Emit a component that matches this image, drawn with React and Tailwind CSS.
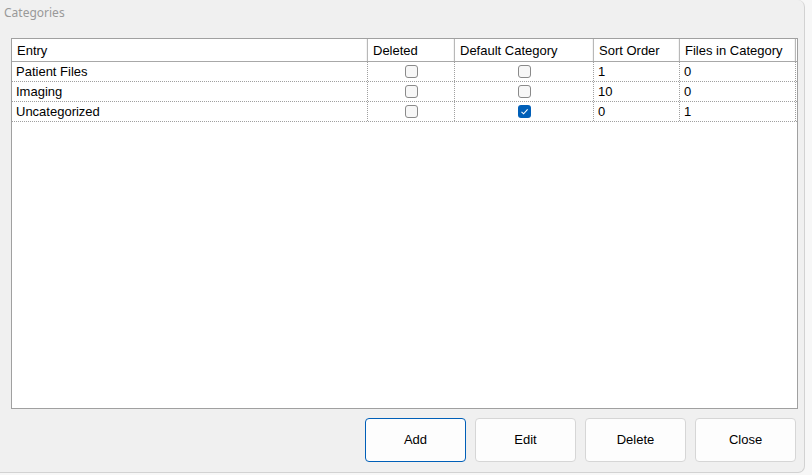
import React from 'react';

const rows = [
  { entry: 'Patient Files', deleted: false, def: false, sort: '1', files: '0' },
  { entry: 'Imaging', deleted: false, def: false, sort: '10', files: '0' },
  { entry: 'Uncategorized', deleted: false, def: true, sort: '0', files: '1' },
];

const Check = ({ checked }) =>
  checked ? (
    <span className="w-[13px] h-[13px] rounded-[3px] bg-[#005fb8] flex items-center justify-center">
      <svg width="9" height="9" viewBox="0 0 9 9">
        <path d="M1.5 4.8 L3.6 6.8 L7.6 2.4" fill="none" stroke="white" strokeWidth="1.1" />
      </svg>
    </span>
  ) : (
    <span className="w-[13px] h-[13px] rounded-[3px] border border-[#8a8a8a] bg-[#f7f7f7]" />
  );

const HeaderCell = ({ w, children }) => (
  <div
    className={`${w} h-full flex items-center pl-[5px] border-r border-[#b8b8b8] shadow-[inset_-1px_0_0_#f4f4f4]`}
  >
    {children}
  </div>
);

const Button = ({ primary, children }) => (
  <button
    className={`w-[101px] h-[44px] rounded-[4px] bg-[#fdfdfd] text-[13px] text-black border ${
      primary ? 'border-[#005fb8]' : 'border-[#d6d6d6]'
    }`}
  >
    {children}
  </button>
);

export default function App() {
  return (
    <div className="w-[812px] h-[475px] bg-[#f7f7f7] font-['Liberation_Sans',Arial,sans-serif] text-[13px] text-black">
      <div className="w-[805px] h-[473px] bg-[#f0f0f0] rounded-r-[7px] border-r border-b border-[#d2d2d2] flex flex-col">
        {/* title */}
        <div className="h-[27px] pl-[4px] pt-[5px] text-[12px] text-[#999999] font-['Noto_Sans',sans-serif] leading-[16px]">
          Categories
        </div>

        {/* grid */}
        <div className="ml-[11px] mt-[11px] w-[787px] h-[371px] border border-[#a0a0a0] bg-white flex flex-col">
          <div className="h-[23px] flex border-b border-[#a8a8a8] bg-white leading-none">
            <HeaderCell w="w-[356px]">Entry</HeaderCell>
            <HeaderCell w="w-[87px]">Deleted</HeaderCell>
            <HeaderCell w="w-[139px]">Default Category</HeaderCell>
            <HeaderCell w="w-[86px]">Sort Order</HeaderCell>
            <HeaderCell w="w-[116px]">Files in Category</HeaderCell>
          </div>
          {rows.map((r) => (
            <div key={r.entry} className="h-[20px] flex border-b border-dotted border-[#a0a0a0] leading-none">
              <div className="w-[356px] flex items-center pl-[4px] border-r border-dotted border-[#a0a0a0]">{r.entry}</div>
              <div className="w-[87px] flex items-center justify-center border-r border-dotted border-[#a0a0a0]">
                <Check checked={r.deleted} />
              </div>
              <div className="w-[139px] flex items-center justify-center border-r border-dotted border-[#a0a0a0]">
                <Check checked={r.def} />
              </div>
              <div className="w-[86px] flex items-center pl-[4px] border-r border-dotted border-[#a0a0a0]">{r.sort}</div>
              <div className="w-[116px] flex items-center pl-[4px] border-r border-dotted border-[#a0a0a0]">{r.files}</div>
            </div>
          ))}
        </div>

        {/* buttons */}
        <div className="mt-[9px] pr-[8px] flex justify-end gap-[9px]">
          <Button primary>Add</Button>
          <Button>Edit</Button>
          <Button>Delete</Button>
          <Button>Close</Button>
        </div>
      </div>
    </div>
  );
}
